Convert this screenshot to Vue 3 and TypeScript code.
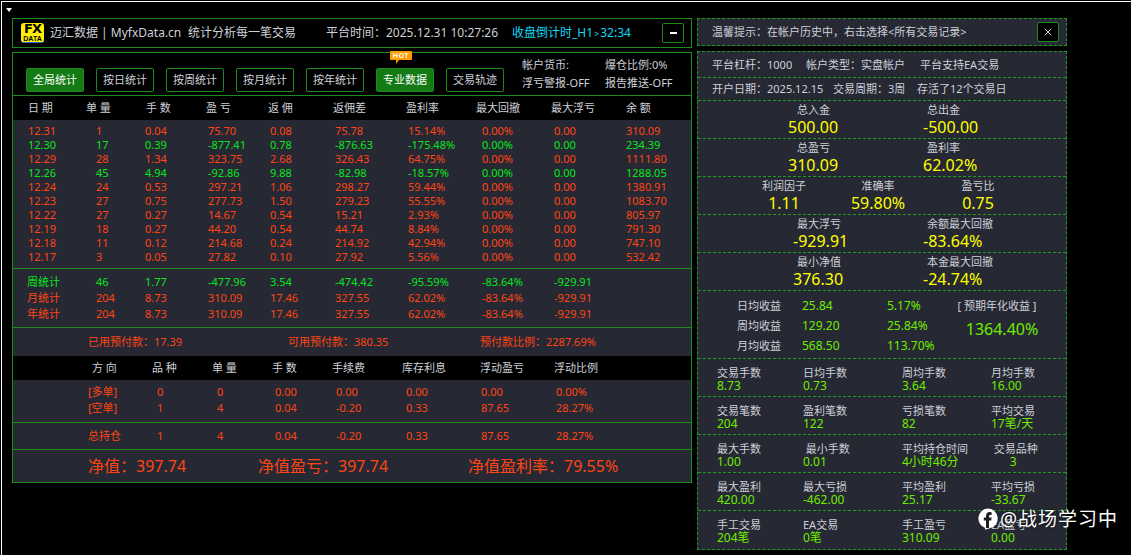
<script setup lang="ts">
type Row = { c: string; v: string[] }
const r = 'red', g = 'grn'
const days: Row[] = [
  { c: r, v: ['12.31','1','0.04','75.70','0.08','75.78','15.14%','0.00%','0.00','310.09'] },
  { c: g, v: ['12.30','17','0.39','-877.41','0.78','-876.63','-175.48%','0.00%','0.00','234.39'] },
  { c: r, v: ['12.29','28','1.34','323.75','2.68','326.43','64.75%','0.00%','0.00','1111.80'] },
  { c: g, v: ['12.26','45','4.94','-92.86','9.88','-82.98','-18.57%','0.00%','0.00','1288.05'] },
  { c: r, v: ['12.24','24','0.53','297.21','1.06','298.27','59.44%','0.00%','0.00','1380.91'] },
  { c: r, v: ['12.23','27','0.75','277.73','1.50','279.23','55.55%','0.00%','0.00','1083.70'] },
  { c: r, v: ['12.22','27','0.27','14.67','0.54','15.21','2.93%','0.00%','0.00','805.97'] },
  { c: r, v: ['12.19','18','0.27','44.20','0.54','44.74','8.84%','0.00%','0.00','791.30'] },
  { c: r, v: ['12.18','11','0.12','214.68','0.24','214.92','42.94%','0.00%','0.00','747.10'] },
  { c: r, v: ['12.17','3','0.05','27.82','0.10','27.92','5.56%','0.00%','0.00','532.42'] },
]
const stats: Row[] = [
  { c: g, v: ['周统计','46','1.77','-477.96','3.54','-474.42','-95.59%','-83.64%','-929.91',''] },
  { c: r, v: ['月统计','204','8.73','310.09','17.46','327.55','62.02%','-83.64%','-929.91',''] },
  { c: r, v: ['年统计','204','8.73','310.09','17.46','327.55','62.02%','-83.64%','-929.91',''] },
]
const heads = ['日 期','单 量','手 数','盈 亏','返 佣','返佣差','盈利率','最大回撤','最大浮亏','余 额']
const buttons = ['全局统计','按日统计','按周统计','按月统计','按年统计','专业数据','交易轨迹']
const posHeads = ['方 向','品 种','单 量','手 数','手续费','库存利息','浮动盈亏','浮动比例']
const pos = [
  ['[多单]','0','0','0.00','0.00','0.00','0.00','0.00%'],
  ['[空单]','1','4','0.04','-0.20','0.33','87.65','28.27%'],
]
const total = ['总持仓','1','4','0.04','-0.20','0.33','87.65','28.27%']
const pairs = [
  [['总入金','500.00'],['总出金','-500.00']],
  [['总盈亏','310.09'],['盈利率','62.02%']],
]
const triple = [['利润因子','1.11'],['准确率','59.80%'],['盈亏比','0.75']]
const pairs2 = [
  [['最大浮亏','-929.91'],['余额最大回撤','-83.64%']],
  [['最小净值','376.30'],['本金最大回撤','-24.74%']],
]
const yields = [
  ['日均收益','25.84','5.17%'],
  ['周均收益','129.20','25.84%'],
  ['月均收益','568.50','113.70%'],
]
const quads = [
  [['交易手数','8.73'],['日均手数','0.73'],['周均手数','3.64'],['月均手数','16.00']],
  [['交易笔数','204'],['盈利笔数','122'],['亏损笔数','82'],['平均交易','17笔/天']],
  [['最大手数','1.00'],['\u00a0最小手数','0.01'],['平均持仓时间','4小时46分'],['\u00a0交易品种','\u00a0\u00a0\u00a0\u00a0\u00a0\u00a03']],
  [['最大盈利','420.00'],['最大亏损','-462.00'],['平均盈利','25.17'],['平均亏损','-33.67']],
  [['手工交易','204笔'],['EA交易','0笔'],['手工盈亏','310.09'],['EA盈亏','0.00']],
]
</script>

<template>
  <div class="frame">
    <span class="arrow"></span>
    <div class="left">
      <header class="head">
        <div class="logo"><b>FX</b><i>DATA</i></div>
        <span>迈汇数据 | MyfxData.cn</span>
        <span>统计分析每一笔交易</span>
        <span>平台时间：2025.12.31 10:27:26</span>
        <span class="cyan">收盘倒计时_H1<small>&gt;</small>32:34</span>
        <button class="icon-btn"><span class="minus"></span></button>
      </header>

      <section class="main">
        <div class="toolbar">
          <button v-for="(b, i) in buttons" :key="b" class="btn" :class="{ on: i === 0 || i === 5 }">
            {{ b }}
            <span v-if="i === 5" class="hot">HOT</span>
          </button>
          <div class="info">
            <span>帐户货币:</span><span>爆仓比例:0%</span>
            <span>浮亏警报-OFF</span><span>报告推送-OFF</span>
          </div>
        </div>

        <div class="thead t-head"><span v-for="h in heads" :key="h">{{ h }}</span></div>
        <div class="days">
          <div v-for="d in days" :key="d.v[0]" class="t-row" :class="d.c">
            <span v-for="(v, i) in d.v" :key="i">{{ v }}</span>
          </div>
        </div>
        <div class="stats">
          <div v-for="s in stats" :key="s.v[0]" class="t-row st" :class="s.c">
            <span v-for="(v, i) in s.v" :key="i">{{ v }}</span>
          </div>
        </div>
        <div class="prepaid red">
          <span>已用预付款：17.39</span>
          <span>可用预付款：380.35</span>
          <span>预付款比例：2287.69%</span>
        </div>
        <div class="thead p-head"><span v-for="h in posHeads" :key="h">{{ h }}</span></div>
        <div class="pos">
          <div v-for="p in pos" :key="p[0]" class="p-row red">
            <span v-for="(v, i) in p" :key="i">{{ v }}</span>
          </div>
        </div>
        <div class="total p-row red"><span v-for="(v, i) in total" :key="i">{{ v }}</span></div>
        <div class="net red">
          <span>净值：397.74</span>
          <span>净值盈亏：397.74</span>
          <span>净值盈利率：79.55%</span>
        </div>
      </section>
    </div>

    <aside class="right">
      <div class="tip">
        <span>温馨提示：在帐户历史中，右击选择&lt;所有交易记录&gt;</span>
        <button class="icon-btn">
          <svg width="8" height="8" viewBox="0 0 8 8"><path d="M1 1l6 6M7 1L1 7" stroke="#d5d8dd" stroke-width="1" fill="none" /></svg>
        </button>
      </div>
      <div class="panel">
        <div class="acct a1"><span>平台杠杆：1000</span><span>帐户类型：实盘帐户</span><span>平台支持EA交易</span></div>
        <div class="acct a2"><span>开户日期：2025.12.15</span><span>交易周期：3周</span><span>存活了12个交易日</span></div>
        <div v-for="(p, i) in pairs" :key="i" class="big two">
          <div v-for="c in p" :key="c[0]"><span>{{ c[0] }}</span><b>{{ c[1] }}</b></div>
        </div>
        <div class="big three">
          <div v-for="c in triple" :key="c[0]"><span>{{ c[0] }}</span><b>{{ c[1] }}</b></div>
        </div>
        <div v-for="(p, i) in pairs2" :key="'b' + i" class="big two lo">
          <div v-for="c in p" :key="c[0]"><span>{{ c[0] }}</span><b>{{ c[1] }}</b></div>
        </div>
        <div class="yield">
          <div class="y-grid">
            <template v-for="y in yields" :key="y[0]">
              <span>{{ y[0] }}</span><em>{{ y[1] }}</em><em>{{ y[2] }}</em>
            </template>
          </div>
          <div class="y-side">
            <span>[ 预期年化收益 ]</span>
            <em>1364.40%</em>
          </div>
        </div>
        <div v-for="(q, i) in quads" :key="'q' + i" class="quad">
          <div v-for="c in q" :key="c[0]"><span>{{ c[0] }}</span><em>{{ c[1] }}</em></div>
        </div>
      </div>
    </aside>

    <div class="mark">
      <svg width="21" height="22" viewBox="0 0 21 22">
        <path d="M10.5 0.5a10 10 0 0 1 2.2 19.8l-4.6 1.4v-1.8A10 10 0 0 1 10.5 0.5z" fill="#fff" />
        <path d="M9 20v-7.5H6.8V9.6H9V8c0-2.6 1.5-3.9 3.6-3.9l2 .2V7h-1.2c-1.1 0-1.4.6-1.4 1.3v1.3h2.6l-.4 2.9H12V20z" fill="#1d1e24" />
      </svg>
      <span>@战场学习中</span>
    </div>
  </div>
</template>

<style scoped>
.frame {
  position: relative;
  box-sizing: border-box;
  width: 1130px;
  height: 554px;
  margin: 1px 0 0 1px;
  padding: 16px 0 0 10px;
  display: flex;
  gap: 5px;
  overflow: hidden;
  background: #000;
  border-top: 1px solid #fff;
  border-left: 1px solid #fff;
  color: #cdd1d8;
  font: 11px/14px "Noto Sans", "Noto Sans CJK SC", sans-serif;
}
.arrow {
  position: absolute;
  left: 4px;
  top: 6px;
  border: 3px solid transparent;
  border-top: 4px solid #fff;
  border-bottom: 0;
}
.left { width: 680px; display: flex; flex-direction: column; gap: 4px; }
.head {
  box-sizing: border-box;
  height: 30px;
  padding-left: 8px;
  border: 1px solid #1e8a1e;
  display: grid;
  grid-template-columns: 29px 138px 138px 186px 150px 22px;
  align-items: center;
  font-size: 12px;
}
.logo {
  width: 23px;
  height: 20px;
  border-radius: 3px;
  background: #ffee00;
  color: #000;
  display: flex;
  flex-direction: column;
  align-items: center;
  border-bottom: 1px solid #2a6ecc;
  box-sizing: border-box;
}
.logo b { font: 900 13px/12px "DejaVu Sans", sans-serif; letter-spacing: -1px; }
.logo i { font: 700 7px/7px "Liberation Sans", sans-serif; }
.cyan { color: #12d6f5; }
.cyan small { font-size: 9px; margin: 0 1px; }
.icon-btn {
  box-sizing: border-box;
  width: 22px;
  height: 20px;
  padding: 0;
  border: 1px solid #1e8a1e;
  border-radius: 2px;
  background: #000;
  color: #fff;
  display: flex;
  align-items: center;
  justify-content: center;
}
.minus { width: 7px; height: 2px; background: #fff; }
.main { height: 431px; box-sizing: border-box; border: 1px solid #1e8a1e; display: flex; flex-direction: column; }
.toolbar {
  height: 43px;
  box-sizing: border-box;
  padding: 0 0 3px 13px;
  border-bottom: 1px solid #1e8a1e;
  display: flex;
  align-items: flex-end;
  gap: 12px;
}
.btn {
  position: relative;
  box-sizing: border-box;
  width: 58px;
  height: 24px;
  padding: 0;
  border: 1px solid #1e8a1e;
  border-radius: 2px;
  background: #000;
  color: #cdd1d8;
  font: inherit;
}
.btn.on { background: #147a14; color: #fff; }
.hot {
  position: absolute;
  left: 13px;
  top: -18px;
  width: 22px;
  height: 9px;
  border-radius: 1px;
  background: #ff9a00;
  color: #fff;
  font: 700 7px/9px "Liberation Sans", sans-serif;
  letter-spacing: 0.5px;
}
.hot::after {
  content: "";
  position: absolute;
  left: 6px;
  top: 9px;
  border: 2px solid transparent;
  border-top: 4px solid #ff9a00;
  border-bottom: 0;
  border-right-width: 3px;
  border-left-width: 0;
}
.info {
  margin-left: 6px;
  display: grid;
  grid-template-columns: 83px auto;
  grid-auto-rows: 18px;
  line-height: 18px;
}
.thead { background: #000; display: grid; align-items: center; }
.t-head {
  height: 24px;
  padding-left: 15px;
  grid-template-columns: 58px 60px 60px 62px 65px 73px 70px 75px 75px auto;
}
.t-row {
  height: 14px;
  padding-left: 15px;
  display: grid;
  grid-template-columns: 68px 49px 63px 62px 65px 73px 74px 72px 72px auto;
}
.st { height: 16px; line-height: 16px; padding-left: 14px; grid-template-columns: 69px 49px 63px 62px 65px 73px 74px 72px 72px auto; }
.red { color: #ff4513; }
.grn { color: #0ae61e; }
.days { height: 149px; box-sizing: border-box; padding-top: 4px; background: #262833; border-bottom: 1px solid #1e8a1e; }
.stats { height: 59px; box-sizing: border-box; padding-top: 5px; background: #262833; border-bottom: 1px solid #1e8a1e; }
.prepaid {
  height: 28px;
  padding-left: 75px;
  background: #262833;
  display: grid;
  grid-template-columns: 200px 192px auto;
  align-items: center;
}
.p-head {
  height: 24px;
  padding-left: 79px;
  grid-template-columns: 60px 60px 60px 60px 70px 78px 74px auto;
}
.pos { height: 43px; box-sizing: border-box; padding-top: 4px; background: #262833; border-bottom: 1px solid #1e8a1e; }
.p-row {
  height: 16px;
  line-height: 16px;
  padding-left: 75px;
  display: grid;
  grid-template-columns: 69px 60px 58px 61px 70px 75px 75px auto;
}
.total {
  height: 27px;
  box-sizing: border-box;
  padding-top: 5px;
  background: #262833;
  border-bottom: 1px solid #1e8a1e;
}
.net {
  flex: 1;
  padding-left: 75px;
  background: #262833;
  display: grid;
  grid-template-columns: 170px 210px auto;
  align-items: center;
  font-size: 16px;
}
.right { width: 370px; display: flex; flex-direction: column; gap: 5px; }
.tip {
  box-sizing: border-box;
  height: 28px;
  padding: 0 7px 0 14px;
  border: 1px dashed #1f9c1f;
  background: #262833;
  display: flex;
  align-items: center;
  justify-content: space-between;
}
.panel { height: 499px; box-sizing: border-box; border: 1px dashed #1f9c1f; background: #262833; }
.acct { display: grid; align-items: center; padding-left: 14px; border-bottom: 1px dashed #1f9c1f; box-sizing: border-box; }
.a1 { height: 26px; grid-template-columns: 94px 114px auto; }
.a2 { height: 23px; padding-bottom: 1px; grid-template-columns: 121px 84px auto; }
.big {
  height: 38px;
  box-sizing: border-box;
  padding-top: 2px;
  border-bottom: 1px dashed #1f9c1f;
  display: grid;
}
.big > div { display: flex; flex-direction: column; }
.big span { line-height: 14px; }
.big b { font-weight: 400; font-size: 16px; line-height: 20px; color: #ffff00; white-space: nowrap; }
.two { padding-left: 99px; grid-template-columns: 130px 130px; }
.two > div:first-child b { margin-left: -9px; }
.two > div:last-child b { margin-left: -4px; }
.two.lo > div:first-child b { margin-left: -4px; }
.three { padding-left: 38px; grid-template-columns: 96px 92px 108px; }
.three > div { align-items: center; }
em { font-style: normal; color: #6eec00; }
.yield {
  height: 68px;
  box-sizing: border-box;
  padding: 5px 0 0 39px;
  border-bottom: 1px dashed #1f9c1f;
  display: flex;
}
.y-grid {
  display: grid;
  grid-template-columns: 65px 85px 65px;
  grid-auto-rows: 20px;
  align-items: center;
}
.y-grid em { font-size: 12px; }
.y-side { display: flex; flex-direction: column; align-items: center; width: 90px; line-height: 20px; }
.y-side em { font-size: 16px; line-height: 26px; margin-left: 10px; }
.quad {
  height: 38px;
  box-sizing: border-box;
  padding: 7px 0 0 19px;
  border-bottom: 1px dashed #1f9c1f;
  display: grid;
  grid-template-columns: 86px 99px 89px auto;
  line-height: 13px;
}
.quad:last-child { border-bottom: 0; }
.quad > div { display: flex; flex-direction: column; }
.quad em { font-size: 12px; }
.mark {
  position: absolute;
  left: 975px;
  top: 506px;
  display: flex;
  align-items: center;
  gap: 2px;
  color: #fff;
  font-size: 19px;
  line-height: 22px;
  letter-spacing: 1px;
  text-shadow: 0 0 3px #000;
}
</style>

<style>
html, body { margin: 0; background: #000; }
</style>
